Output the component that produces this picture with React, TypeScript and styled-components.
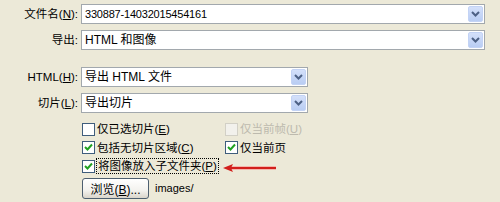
import React from 'react';
import styled, { createGlobalStyle } from 'styled-components';

const GlobalStyle = createGlobalStyle`
  body {
    margin: 0;
    background: #ece9d8;
    font-family: 'Liberation Sans', 'Noto Sans CJK SC', sans-serif;
    font-size: 11px;
    color: #000;
  }
`;

const Panel = styled.div`
  width: 500px;
  height: 202px;
  box-sizing: border-box;
  padding: 4px 15px 0 0;
  background: #ece9d8;
  overflow: hidden;
`;

const FieldRow = styled.div<{ $top?: number; $width?: number }>`
  display: grid;
  grid-template-columns: 78px ${(p) => (p.$width ? `${p.$width}px` : '1fr')};
  column-gap: 3px;
  align-items: center;
  margin-top: ${(p) => p.$top || 0}px;
`;

const Label = styled.div`
  text-align: right;
  white-space: nowrap;
  font-size: 11.5px;
  line-height: 14px;
`;

const Key = styled.span`
  text-decoration: underline;
`;

const Combo = styled.div`
  height: 20px;
  box-sizing: border-box;
  border: 1px solid #a2a8ad;
  background: #fff;
  display: flex;
  align-items: center;
`;

const ComboText = styled.div<{ $mono?: boolean }>`
  flex: 1;
  padding-left: 3px;
  font-size: ${(p) => (p.$mono ? '11px' : '12px')};
  letter-spacing: ${(p) => (p.$mono ? '-0.2px' : '0')};
  line-height: 14px;
  white-space: nowrap;
`;

const DropButton = styled.div`
  width: 15px;
  height: 16px;
  margin-right: 1px;
  border-radius: 2px;
  border: 1px solid #c3d3f5;
  box-sizing: border-box;
  background: linear-gradient(#d4e0fa, #b9cdf3);
  display: flex;
  align-items: center;
  justify-content: center;
`;

const CheckArea = styled.div`
  margin: 7px 0 0 82px;
  display: grid;
  grid-template-columns: 143px auto;
  grid-auto-rows: 18.5px;
  align-items: center;
`;

const CheckRow = styled.div<{ $disabled?: boolean }>`
  display: flex;
  align-items: center;
  gap: 2px;
  font-size: 11.5px;
  color: ${(p) => (p.$disabled ? '#bdbaae' : '#000')};
  white-space: nowrap;
  line-height: 14px;
`;

const Box = styled.div<{ $disabled?: boolean }>`
  width: 13px;
  height: 13px;
  box-sizing: border-box;
  border: 1px solid ${(p) => (p.$disabled ? '#d2d0c6' : '#3f5d7c')};
  background: ${(p) => (p.$disabled ? '#f2f1ec' : '#fff')};
  display: flex;
  align-items: center;
  justify-content: center;
  flex-shrink: 0;
`;

const Focus = styled.span`
  outline: 1px dotted #000;
  outline-offset: 0;
  padding: 0 1px;
`;

const Wide = styled.div`
  grid-column: 1 / span 2;
  display: flex;
  align-items: center;
`;

const Arrow = styled.svg`
  margin-left: 4px;
  margin-top: 3px;
`;

const BrowseRow = styled.div`
  margin: 2px 0 0 82px;
  display: flex;
  align-items: center;
`;

const Button = styled.button`
  width: 67px;
  height: 21px;
  padding: 0;
  border: 1px solid #4d5f70;
  border-radius: 3px;
  background: linear-gradient(#ffffff, #f3f2ee 60%, #d9d5cb);
  font-family: 'Liberation Sans', 'Noto Sans CJK SC', sans-serif;
  font-size: 12px;
  color: #000;
`;

const PathText = styled.span`
  margin-left: 6px;
  font-size: 11px;
`;

const Chevron = () => (
  <svg width="9" height="6" viewBox="0 0 9 6">
    <path d="M1 1 L4.5 4.5 L8 1" fill="none" stroke="#4d6185" strokeWidth="2" />
  </svg>
);

const Check = () => (
  <svg width="9" height="9" viewBox="0 0 9 9">
    <path d="M1 4 L3.5 6.5 L8 1.5" fill="none" stroke="#21a121" strokeWidth="2" />
  </svg>
);

const Field = ({ text, mono }: { text: string; mono?: boolean }) => (
  <Combo>
    <ComboText $mono={mono}>{text}</ComboText>
    <DropButton>
      <Chevron />
    </DropButton>
  </Combo>
);

const Option = ({
  checked,
  disabled,
  children,
}: {
  checked?: boolean;
  disabled?: boolean;
  children: React.ReactNode;
}) => (
  <CheckRow $disabled={disabled}>
    <Box $disabled={disabled}>{checked && <Check />}</Box>
    <span>{children}</span>
  </CheckRow>
);

const App = () => {
  return (
    <Panel>
      <GlobalStyle />
      <FieldRow>
        <Label>
          文件名(<Key>N</Key>):
        </Label>
        <Field text="330887-14032015454161" mono />
      </FieldRow>
      <FieldRow $top={6}>
        <Label>导出:</Label>
        <Field text="HTML 和图像" />
      </FieldRow>
      <FieldRow $top={17} $width={227}>
        <Label>
          HTML(<Key>H</Key>):
        </Label>
        <Field text="导出 HTML 文件" />
      </FieldRow>
      <FieldRow $top={6} $width={227}>
        <Label>
          切片(<Key>L</Key>):
        </Label>
        <Field text="导出切片" />
      </FieldRow>
      <CheckArea>
        <Option>
          仅已选切片(<Key>E</Key>)
        </Option>
        <Option disabled>
          仅当前帧(<Key>U</Key>)
        </Option>
        <Option checked>
          包括无切片区域(<Key>C</Key>)
        </Option>
        <Option checked>仅当前页</Option>
        <Wide>
          <CheckRow>
            <Box>
              <Check />
            </Box>
            <Focus>
              将图像放入子文件夹(<Key>P</Key>)
            </Focus>
          </CheckRow>
          <Arrow width="56" height="10" viewBox="0 0 56 10">
            <path d="M54 5 H8" stroke="#f3b7ae" strokeWidth="4" />
            <path d="M54 5 H8" stroke="#d21f1c" strokeWidth="2" />
            <path d="M1 5 L11 1 L9 5 L11 9 Z" fill="#d21f1c" />
          </Arrow>
        </Wide>
      </CheckArea>
      <BrowseRow>
        <Button>
          浏览(<Key>B</Key>)...
        </Button>
        <PathText>images/</PathText>
      </BrowseRow>
    </Panel>
  );
};

export default App;
